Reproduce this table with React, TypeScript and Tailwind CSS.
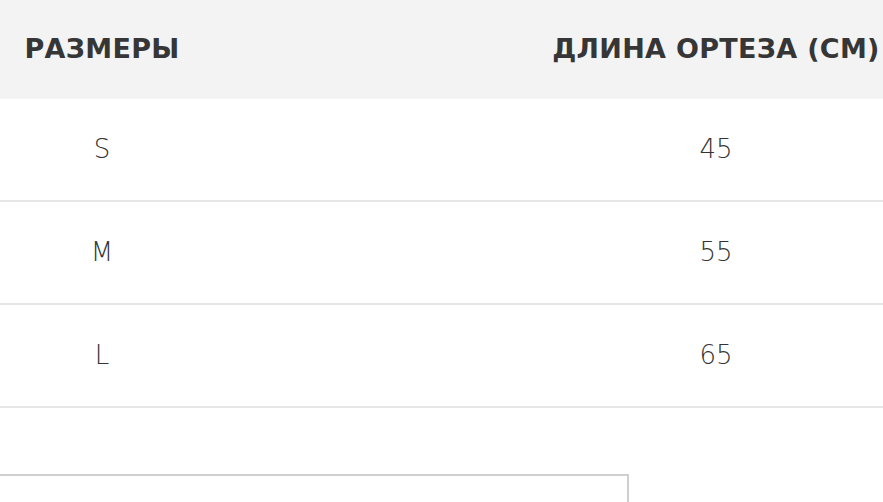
export default function App() {
  const rows = [
    { size: "S", len: "45" },
    { size: "M", len: "55" },
    { size: "L", len: "65" },
  ];
  return (
    <main className="w-[883px] h-[502px] overflow-hidden bg-white text-[#333] font-['DejaVu_Sans',sans-serif]">
      <div className="grid grid-cols-[204px_1fr_334px] h-[99px] items-center bg-[#f3f3f3] text-[27px] font-bold tracking-[0.3px] text-[#363636]">
        <div className="text-center">РАЗМЕРЫ</div>
        <div />
        <div className="text-center whitespace-nowrap">ДЛИНА ОРТЕЗА (СМ)</div>
      </div>
      {rows.map((r) => (
        <div
          key={r.size}
          className="grid grid-cols-[204px_1fr_334px] h-[103px] items-center border-b-2 border-[#e6e6e6] text-[26px] font-light"
        >
          <div className="text-center">{r.size}</div>
          <div />
          <div className="text-center">{r.len}</div>
        </div>
      ))}
      <div className="mt-[66px] w-[629px] h-[40px] border-t-2 border-r-2 border-[#cfcfcf]" />
    </main>
  );
}
